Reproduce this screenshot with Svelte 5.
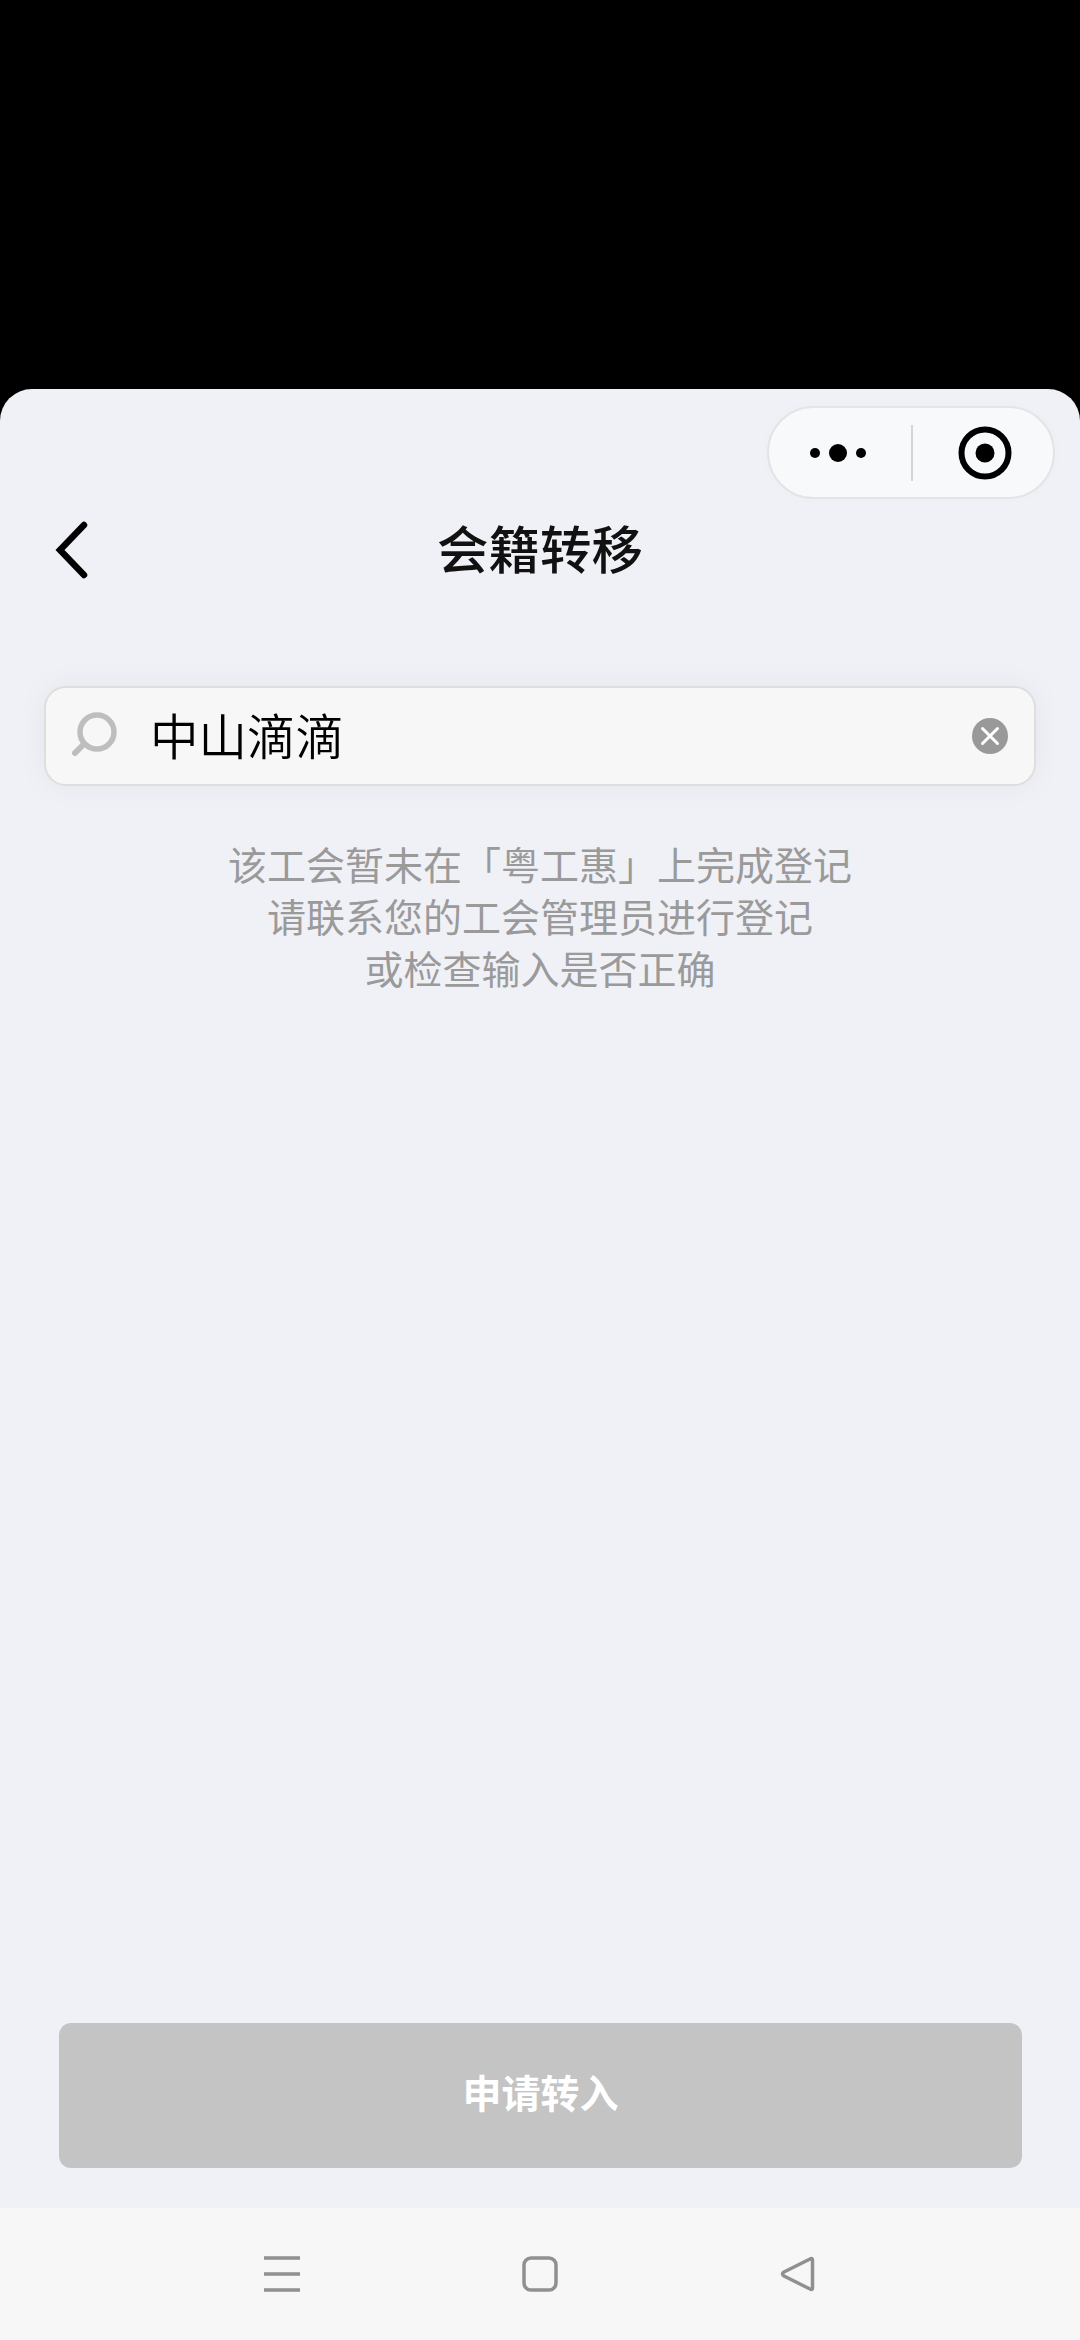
<script>
  const hint = ['该工会暂未在「粤工惠」上完成登记', '请联系您的工会管理员进行登记', '或检查输入是否正确']
</script>

<div class="page">
  <div class="sheet">
    <div class="capsule-row">
      <div class="capsule">
        <svg viewBox="0 0 142 93" width="142" height="93">
          <circle cx="46" cy="47" r="5" />
          <circle cx="69" cy="47" r="9" />
          <circle cx="92" cy="47" r="5" />
        </svg>
        <span class="divider"></span>
        <svg viewBox="0 0 140 93" width="140" height="93">
          <circle cx="72" cy="47" r="23.5" fill="none" stroke="#000" stroke-width="6" />
          <circle cx="72" cy="47" r="9.5" />
        </svg>
      </div>
    </div>

    <header class="nav">
      <svg class="back" viewBox="0 0 40 60" width="40" height="60">
        <path d="M29 5 L5 30 L29 55" fill="none" stroke="#000" stroke-width="6.5" stroke-linecap="round" stroke-linejoin="miter" />
      </svg>
      <h1>会籍转移</h1>
    </header>

    <div class="search">
      <svg class="glass" viewBox="0 0 48 48" width="48" height="48">
        <circle cx="27" cy="20" r="17" fill="none" stroke="#bebebe" stroke-width="5.5" />
        <path d="M14 32 L5 41" fill="none" stroke="#bebebe" stroke-width="6" stroke-linecap="round" />
      </svg>
      <span class="value">中山滴滴</span>
      <svg class="clear" viewBox="0 0 36 36" width="36" height="36">
        <circle cx="18" cy="18" r="18" fill="#999" />
        <path d="M10.5 10.5 L25.5 25.5 M25.5 10.5 L10.5 25.5" stroke="#fff" stroke-width="3" stroke-linecap="round" />
      </svg>
    </div>

    <div class="hint">
      {#each hint as line}
        <p>{line}</p>
      {/each}
    </div>

    <button class="apply" disabled>申请转入</button>
  </div>

  <footer class="sysbar">
    <svg viewBox="0 0 36 36" width="36" height="36">
      <path d="M0 2 H36 M0 18 H36 M0 34 H36" stroke="#909090" stroke-width="3.5" fill="none" />
    </svg>
    <svg viewBox="0 0 36 36" width="36" height="36">
      <rect x="2" y="2" width="32" height="32" rx="7" fill="none" stroke="#909090" stroke-width="3.5" />
    </svg>
    <svg viewBox="0 0 36 36" width="36" height="36">
      <path d="M32.5 4 V32 Q32.5 34.5 30 33 L4 20 Q1 18 4 16 L30 3 Q32.5 1.8 32.5 4 Z" fill="none" stroke="#909090" stroke-width="3.5" stroke-linejoin="round" />
    </svg>
  </footer>
</div>

<style>
  :global(body) {
    margin: 0;
    background: #000;
  }
  .page {
    width: 1080px;
    height: 2340px;
    display: flex;
    flex-direction: column;
    padding-top: 389px;
    box-sizing: border-box;
    font-family: "Noto Sans CJK SC", "Noto Sans", sans-serif;
    background: #000;
  }
  .sheet {
    flex: 1;
    display: flex;
    flex-direction: column;
    background: #f0f1f6;
    border-radius: 32px 32px 0 0;
    padding-top: 17px;
  }
  .capsule-row {
    display: flex;
    justify-content: flex-end;
    padding-right: 25px;
  }
  .capsule {
    width: 288px;
    height: 93px;
    box-sizing: border-box;
    display: flex;
    align-items: center;
    background: #f8f9fb;
    border: 2px solid #e4e4e6;
    border-radius: 47px;
    box-shadow: 0 0 14px rgba(0, 0, 0, 0.015);
  }
  .capsule svg {
    flex: none;
  }
  .divider {
    width: 2px;
    height: 56px;
    background: #d4d4d6;
    flex: none;
  }
  .nav {
    margin-top: 10px;
    height: 80px;
    display: flex;
    align-items: center;
    justify-content: center;
    position: relative;
  }
  .back {
    position: absolute;
    left: 55px;
    top: 11px;
  }
  h1 {
    margin: 0 0 4px;
    font-size: 51.5px;
    font-weight: 500;
    color: #111;
    line-height: 76px;
  }
  .search {
    margin: 97px 44px 0;
    height: 100px;
    box-sizing: border-box;
    display: flex;
    align-items: center;
    padding: 0 26px 0 24px;
    background: #f7f7f7;
    border: 2px solid #dedede;
    border-radius: 22px;
    box-shadow: 0 0 30px rgba(0, 0, 0, 0.05);
  }
  .glass {
    flex: none;
  }
  .value {
    margin: 0 0 5px 32px;
    font-size: 48.5px;
    font-weight: 350;
    color: #000;
    flex: 1;
  }
  .clear {
    flex: none;
  }
  .hint {
    margin-top: 51px;
    text-align: center;
    font-size: 39px;
    line-height: 52px;
    color: #9a9a9a;
  }
  .hint p {
    margin: 0;
  }
  .apply {
    margin: auto 58px 40px 59px;
    height: 145px;
    padding: 0 0 10px;
    border: 0;
    border-radius: 12px;
    background: #c4c4c4;
    color: #fff;
    font: inherit;
    font-size: 39px;
    font-weight: 700;
  }
  .sysbar {
    height: 132px;
    flex: none;
    background: #f7f7f7;
    display: flex;
    align-items: center;
    justify-content: center;
    gap: 222px;
  }
</style>
